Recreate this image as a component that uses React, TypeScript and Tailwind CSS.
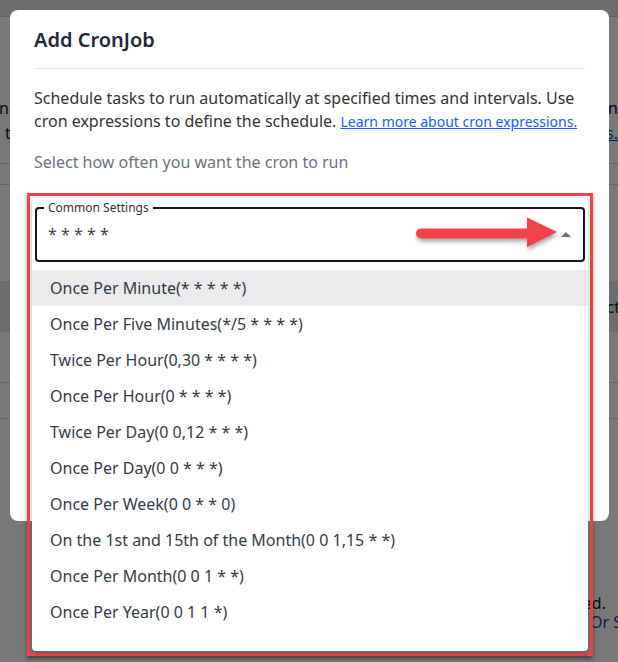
import React from 'react';

// Cron presets shown in the open dropdown
const presets = [
  'Once Per Minute(* * * * *)',
  'Once Per Five Minutes(*/5 * * * *)',
  'Twice Per Hour(0,30 * * * *)',
  'Once Per Hour(0 * * * *)',
  'Twice Per Day(0 0,12 * * *)',
  'Once Per Day(0 0 * * *)',
  'Once Per Week(0 0 * * 0)',
  'On the 1st and 15th of the Month(0 0 1,15 * *)',
  'Once Per Month(0 0 1 * *)',
  'Once Per Year(0 0 1 1 *)',
];

const CalloutArrow: React.FC = () => (
  <svg
    className="absolute left-[410px] top-[210px] drop-shadow-[1px_3px_2px_rgba(0,0,0,0.35)]"
    width="155"
    height="45"
    viewBox="0 0 155 45"
  >
    <path d="M11 18.5 H120 V28.5 H11 A5 5 0 0 1 11 18.5 Z" fill="#f2434a" />
    <path d="M117 7.5 L147 22 L117 37 Z" fill="#f2434a" />
  </svg>
);

const App: React.FC = () => {
  return (
    <div className="relative h-[662px] w-[618px] overflow-hidden bg-white font-['Noto_Sans',sans-serif]">
      {/* Page behind the modal */}
      <div className="h-[17px] border-b border-gray-300 bg-gray-200" />
      <div className="flex justify-between pt-[79px] text-[16px] leading-[25px] text-gray-900">
        <div className="-ml-[1px]">
          <div>nc</div>
          <div className="pl-[6px]">t</div>
        </div>
        <div className="text-right">
          <div>in</div>
          <div className="text-blue-800 underline">s.</div>
        </div>
      </div>
      <div className="mt-[17px] h-[22px] border-y border-gray-300" />
      <div className="mt-[96px] flex h-[51px] items-center justify-end bg-gray-200 text-[16px] text-gray-900">
        <span className="-mr-[2px]">ct</span>
      </div>
      <div className="mt-[50px] h-[37px] border-y border-gray-300" />
      <div className="mt-[175px] flex flex-col items-end text-[16px] leading-[19px]">
        <span className="pr-[12px] text-gray-900">ed.</span>
        <span className="-mr-[4px] text-blue-800">Or S</span>
      </div>

      {/* Backdrop */}
      <div className="absolute inset-0 bg-black/[0.53]" />

      {/* Modal */}
      <div className="absolute left-[10px] top-[10px] h-[511px] w-[599px] rounded-lg bg-white px-6">
        <h2 className="pt-[16px] text-[20px] font-semibold leading-[28px] text-[#1f2937]">Add CronJob</h2>
        <div className="mt-[14px] border-t border-gray-200" />
        <p className="mt-[18px] text-[16px] leading-[23px] text-[#333333]">
          Schedule tasks to run automatically at specified times and intervals. Use cron expressions to define the
          schedule.{' '}
          <a href="#" className="text-[14px] text-blue-600 underline">
            Learn more about cron expressions.
          </a>
        </p>
        <p className="mt-[18px] text-[16px] leading-[23px] text-gray-500">Select how often you want the cron to run</p>
      </div>

      {/* Highlighted select with its open list */}
      <div className="absolute left-[27px] top-[193px] h-[463px] w-[566px] border-[3px] border-[#f2434a] p-[2px] shadow-[0_3px_4px_rgba(0,0,0,0.4)]">
        <div className="flex h-full flex-col rounded bg-white shadow-[0_2px_6px_rgba(0,0,0,0.25)]">
          <div className="relative mx-[3px] mt-[9px] flex h-[55px] items-center justify-between rounded-[4px] border-2 border-[#111827] pl-[11px] pr-[12px]">
            <span className="absolute -top-[9px] left-[7px] bg-white px-[4px] text-[12px] leading-[16px] text-[#333333]">
              Common Settings
            </span>
            <span className="-mt-[1px] text-[16px] text-[#374151]">* * * * *</span>
            <span className="h-0 w-0 border-x-[5px] border-b-[5px] border-x-transparent border-b-[#6b7280]" />
          </div>
          <ul className="mt-[8px] pb-[20px]">
            {presets.map((preset, i) => (
              <li
                key={preset}
                className={`flex h-[36px] items-center pl-[18px] text-[16px] text-[#333b47] ${
                  i === 0 ? 'bg-[#ebebed]' : ''
                }`}
              >
                {preset}
              </li>
            ))}
          </ul>
        </div>
      </div>

      <CalloutArrow />
    </div>
  );
};

export default App;
